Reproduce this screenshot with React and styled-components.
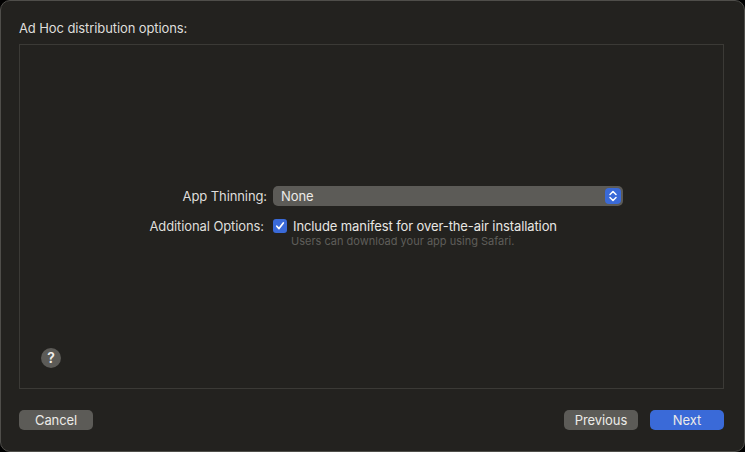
import React, { useState } from "react";
import styled, { createGlobalStyle } from "styled-components";

//전체 ========================================================

const GlobalStyle = createGlobalStyle`
  html, body {
    margin: 0;
    padding: 0;
    background: #000;
  }
  body {
    font-family: "Inter", "Liberation Sans", sans-serif;
    -webkit-font-smoothing: antialiased;
  }
`;

const Sheet = styled.div`
  box-sizing: border-box;
  width: 745px;
  height: 452px;
  display: flex;
  flex-direction: column;
  padding: 19px 20px 0 18px;
  background: #23221f;
  border: 1px solid #4f4e4a;
  border-radius: 10px;
  color: #dfdedb;
  font-size: 13px;
  letter-spacing: -0.1px;
`;

const Title = styled.div`
  line-height: 16px;
`;

//옵션 패널 ===================================================

const Panel = styled.div`
  box-sizing: border-box;
  height: 345px;
  margin-top: 8px;
  border: 1px solid #3b3a36;
  display: grid;
  grid-template-rows: 1fr auto 1fr;
`;

const Form = styled.div`
  grid-row: 2;
  display: grid;
  grid-template-columns: 126px 350px;
  column-gap: 6px;
  row-gap: 12px;
  padding-left: 121px;
  align-items: center;
`;

const Label = styled.div`
  text-align: right;
  padding-right: ${(props) => props.$inset || 0}px;
  align-self: ${(props) => (props.$top ? "start" : "center")};
  line-height: 16px;
  white-space: nowrap;
`;

const Popup = styled.div`
  box-sizing: border-box;
  height: 20px;
  display: flex;
  align-items: center;
  justify-content: space-between;
  padding: 0 2px 0 8px;
  background: #5c5b57;
  border-radius: 5px;
  color: #ecebe8;
`;

const Stepper = styled.span`
  width: 16px;
  height: 16px;
  border-radius: 4px;
  background: #3a6ad8;
  display: flex;
  align-items: center;
  justify-content: center;
`;

const Option = styled.label`
  display: flex;
  flex-direction: column;
`;

const CheckRow = styled.span`
  display: flex;
  align-items: center;
  gap: 6px;
  line-height: 16px;
  color: #e8e7e3;
  white-space: nowrap;
`;

const Box = styled.span`
  width: 14px;
  height: 14px;
  border-radius: 3px;
  background: ${(props) => (props.$on ? "#3a6ad8" : "#5c5b57")};
  display: flex;
  align-items: center;
  justify-content: center;
  flex: none;
`;

const Hint = styled.span`
  padding-left: 18px;
  font-size: 11px;
  line-height: 14px;
  letter-spacing: 0;
  color: #5f5e5a;
`;

const Help = styled.button`
  grid-row: 3;
  align-self: end;
  justify-self: start;
  width: 20px;
  height: 20px;
  margin: 0 0 20px 21px;
  padding: 0;
  border: none;
  border-radius: 50%;
  background: #5c5b57;
  color: #f0efec;
  font-family: inherit;
  font-size: 14px;
  font-weight: 600;
  line-height: 20px;
`;

//하단 버튼 ===================================================

const Footer = styled.div`
  display: flex;
  margin-top: 21px;
  gap: 12px;

  .spacer {
    flex: 1;
  }
`;

const Button = styled.button`
  width: 74px;
  height: 20px;
  padding: 0;
  border: none;
  border-radius: 5px;
  background: ${(props) => (props.$primary ? "#3a6ad8" : "#5c5b57")};
  color: #ecebe8;
  font-family: inherit;
  font-size: 13px;
  letter-spacing: -0.1px;
`;

function Chevrons() {
  return (
    <svg width="10" height="12" viewBox="0 0 10 12" fill="none">
      <path
        d="M2 4.5 L5 1.5 L8 4.5 M2 7.5 L5 10.5 L8 7.5"
        stroke="#fff"
        strokeWidth="1.5"
        strokeLinecap="round"
        strokeLinejoin="round"
      />
    </svg>
  );
}

function Check() {
  return (
    <svg width="10" height="10" viewBox="0 0 10 10" fill="none">
      <path
        d="M1.8 5.2 L4 7.6 L8.3 2"
        stroke="#fff"
        strokeWidth="1.7"
        strokeLinecap="round"
        strokeLinejoin="round"
      />
    </svg>
  );
}

export default function App() {
  const [manifest, setManifest] = useState(true);

  return (
    <>
      <GlobalStyle />
      <Sheet>
        <Title>Ad Hoc distribution options:</Title>
        <Panel>
          <Form>
            <Label>App Thinning:</Label>
            <Popup>
              <span>None</span>
              <Stepper>
                <Chevrons />
              </Stepper>
            </Popup>
            <Label $top $inset={3}>
              Additional Options:
            </Label>
            <Option onClick={() => setManifest(!manifest)}>
              <CheckRow>
                <Box $on={manifest}>{manifest && <Check />}</Box>
                Include manifest for over-the-air installation
              </CheckRow>
              <Hint>Users can download your app using Safari.</Hint>
            </Option>
          </Form>
          <Help>?</Help>
        </Panel>
        <Footer>
          <Button>Cancel</Button>
          <div className="spacer" />
          <Button>Previous</Button>
          <Button $primary>Next</Button>
        </Footer>
      </Sheet>
    </>
  );
}
